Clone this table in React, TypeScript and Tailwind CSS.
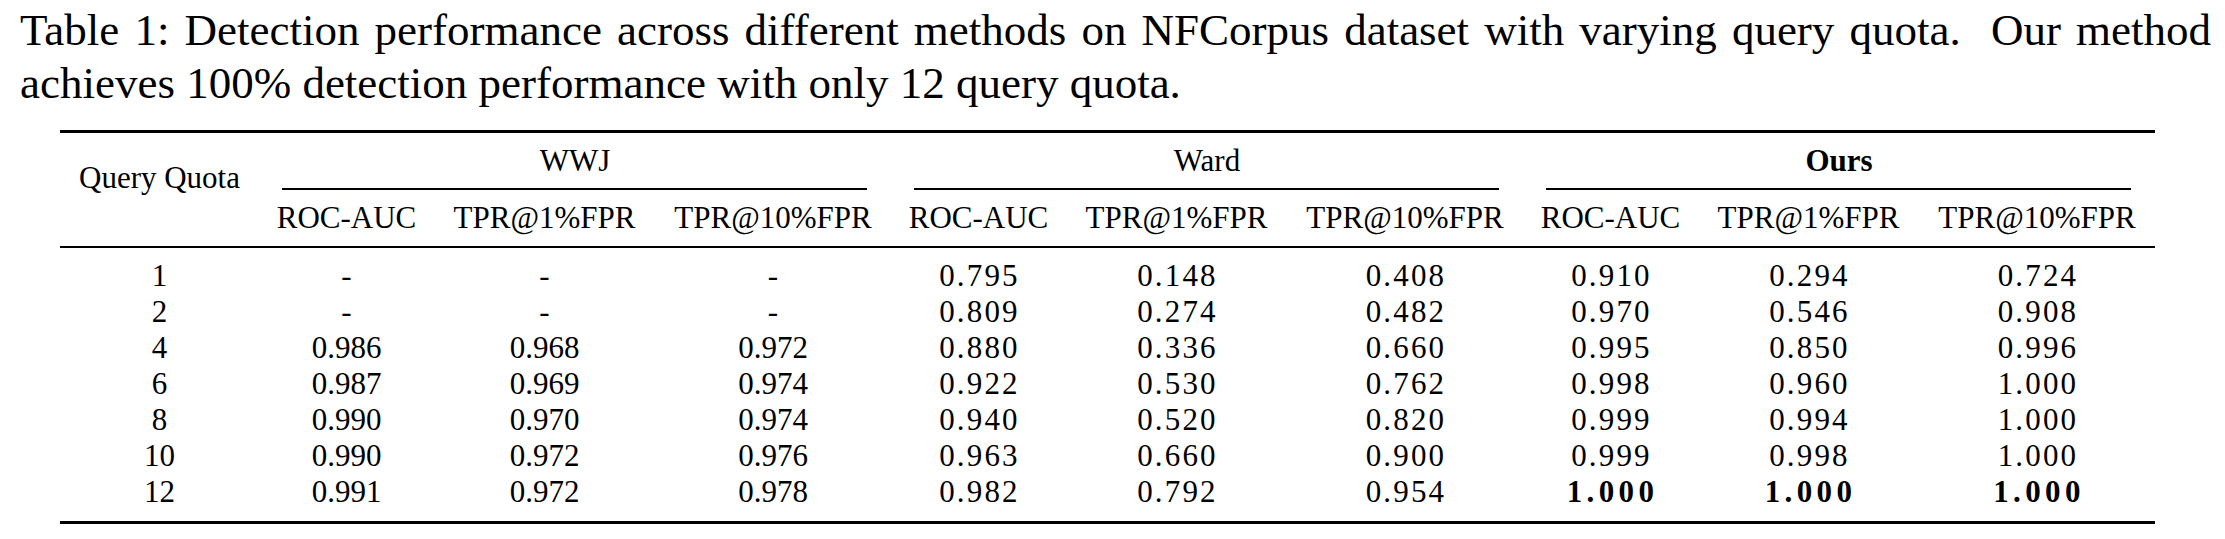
const groups = [
  { name: 'WWJ', bold: false },
  { name: 'Ward', bold: false },
  { name: 'Ours', bold: true },
];

const metrics = ['ROC-AUC', 'TPR@1%FPR', 'TPR@10%FPR'];

const rows: string[][] = [
  ['1', '-', '-', '-', '0.795', '0.148', '0.408', '0.910', '0.294', '0.724'],
  ['2', '-', '-', '-', '0.809', '0.274', '0.482', '0.970', '0.546', '0.908'],
  ['4', '0.986', '0.968', '0.972', '0.880', '0.336', '0.660', '0.995', '0.850', '0.996'],
  ['6', '0.987', '0.969', '0.974', '0.922', '0.530', '0.762', '0.998', '0.960', '1.000'],
  ['8', '0.990', '0.970', '0.974', '0.940', '0.520', '0.820', '0.999', '0.994', '1.000'],
  ['10', '0.990', '0.972', '0.976', '0.963', '0.660', '0.900', '0.999', '0.998', '1.000'],
  ['12', '0.991', '0.972', '0.978', '0.982', '0.792', '0.954', '1.000', '1.000', '1.000'],
];

const Cell = ({ value, col, last }: { value: string; col: number; last: boolean }) => {
  // Ward and Ours columns are typeset in math mode (wider digits)
  const math = col >= 4 && value !== '-';
  const bold = last && col >= 7;
  let spacing = '';
  if (bold) spacing = 'font-bold tracking-[0.14em] pl-[4px]';
  else if (math) spacing = 'tracking-[0.07em] pl-[2px]';
  return <div className={`h-[36px] text-center leading-[36px] whitespace-nowrap ${spacing}`}>{value}</div>;
};

export default function App() {
  return (
    <div className="w-[2225px] h-[539px] bg-white text-black [font-family:Liberation_Serif,Times_New_Roman,serif]">
      {/* Caption */}
      <div className="pl-[20px] pt-[4px] w-[2211px] text-[45px] leading-[53px]">
        <p className="text-justify [text-align-last:justify] whitespace-nowrap">
          Table 1: Detection performance across different methods on NFCorpus dataset with varying query quota.&nbsp; Our method
        </p>
        <p>achieves 100% detection performance with only 12 query quota.</p>
      </div>

      {/* Table */}
      <div className="ml-[60px] mt-[20px] w-[2095px] text-[31px]">
        <div className="h-[3px] bg-black" />

        <div className="grid grid-cols-[199px_175px_221px_236px_175px_221px_236px_175px_221px_236px]">
          <div className="row-span-2 pt-[17px] text-center leading-[55px] whitespace-nowrap">Query Quota</div>
          {groups.map((g) => (
            <div key={g.name} className="col-span-3 flex flex-col">
              <div className={`h-[55px] text-center leading-[55px] ${g.bold ? 'font-bold' : ''}`}>{g.name}</div>
              <div className="ml-[23px] mr-[24px] h-[2px] bg-black" />
            </div>
          ))}
          {groups.map((g) =>
            metrics.map((m) => (
              <div key={g.name + m} className="h-[56px] text-center leading-[56px] whitespace-nowrap">
                {m}
              </div>
            ))
          )}
        </div>

        <div className="h-[2px] bg-black" />

        <div className="grid grid-cols-[199px_175px_221px_236px_175px_221px_236px_175px_221px_236px] pt-[10px] pb-[11px]">
          {rows.map((r, i) =>
            r.map((v, j) => <Cell key={`${i}-${j}`} value={v} col={j} last={i === rows.length - 1} />)
          )}
        </div>

        <div className="h-[3px] bg-black" />
      </div>
    </div>
  );
}
